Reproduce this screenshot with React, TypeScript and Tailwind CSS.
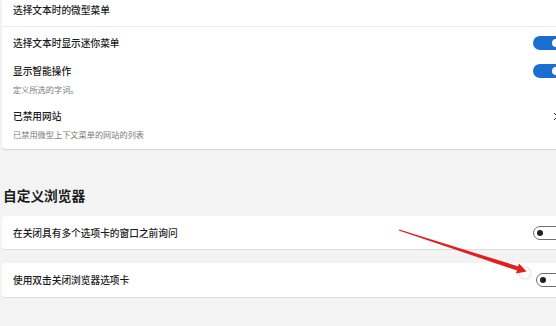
import React from "react";

const font = { fontFamily: '"Noto Sans CJK SC", "Noto Sans", sans-serif' };

function ToggleOn() {
  return (
    <div className="w-[30px] h-[14px] rounded-full bg-[#1a6ed0] flex items-center justify-end pr-[3px] shrink-0">
      <div className="w-[8px] h-[8px] rounded-full bg-white" />
    </div>
  );
}

function ToggleOff({ extra = "" }: { extra?: string }) {
  return (
    <div className={"w-[30px] h-[14px] rounded-full bg-white border border-[#6e6e6e] flex items-center pl-[3px] shrink-0 " + extra}>
      <div className="w-[6px] h-[6px] rounded-full bg-[#1f1f1f]" />
    </div>
  );
}

export default function App() {
  return (
    <div className="relative w-[556px] h-[326px] bg-[#f3f3f3] overflow-hidden text-[#1b1b1b]" style={font}>
      <div className="w-[574px] ml-[2px] flex flex-col">
        {/* top card */}
        <div className="bg-white rounded-b-[4px] shadow-[0_1px_1px_rgba(0,0,0,0.13)] flex flex-col">
          <div className="h-[26px] pb-[7px] pl-[11px] flex items-center text-[9.7px] leading-[14px] font-medium">
            选择文本时的微型菜单
          </div>
          <div className="h-px bg-[#ececec]" />
          <div className="pt-[9px] pb-[9px] pl-[11px] pr-[13px] flex flex-col gap-[14px]">
            <div className="flex items-center justify-between h-[14px]">
              <span className="text-[9.7px] leading-[14px] font-medium">选择文本时显示迷你菜单</span>
              <ToggleOn />
            </div>
            <div className="flex flex-col gap-[5px]">
              <div className="flex items-center justify-between h-[14px]">
                <span className="text-[9.7px] leading-[14px] font-medium">显示智能操作</span>
                <ToggleOn />
              </div>
              <div className="text-[8.2px] leading-[12px] text-[#7a7a7a]">定义所选的字词。</div>
            </div>
            <div className="flex flex-col gap-[5px]">
              <div className="flex items-center justify-between h-[14px]">
                <span className="text-[9.7px] leading-[14px] font-medium">已禁用网站</span>
                <div className="w-[30px] flex justify-start pl-[20px]">
                  <svg width="6" height="9" viewBox="0 0 6 9">
                    <path d="M1 1 L4.5 4.5 L1 8" fill="none" stroke="#333" strokeWidth="1" />
                  </svg>
                </div>
              </div>
              <div className="text-[8.2px] leading-[12px] text-[#7a7a7a]">已禁用微型上下文菜单的网站的列表</div>
            </div>
          </div>
        </div>

        <div className="mt-[36px] h-[20px] flex items-center text-[13.7px] font-semibold leading-[20px] ml-[1px]">
          自定义浏览器
        </div>

        <div className="mt-[11px] h-[34px] bg-white rounded-[4px] border-b border-[#dcdcdc] pl-[11px] pr-[13px] flex items-center justify-between">
          <span className="text-[9.7px] leading-[14px] font-medium">在关闭具有多个选项卡的窗口之前询问</span>
          <ToggleOff />
        </div>

        <div className="mt-[13px] h-[35px] bg-white rounded-[4px] border-b border-[#dcdcdc] pl-[11px] pr-[13px] flex items-center justify-between">
          <span className="text-[9.7px] leading-[14px] font-medium">使用双击关闭浏览器选项卡</span>
          <ToggleOff extra="mr-[-3px]" />
        </div>
      </div>

      {/* red annotation arrow */}
      <svg className="absolute left-0 top-0 pointer-events-none" width="556" height="326" viewBox="0 0 556 326">
        <circle cx="525" cy="273" r="6" fill="none" stroke="#f7e0e0" strokeWidth="1.2" />
        <polygon points="399.2,229.6 398.8,230.4 517.2,270.6 518.4,266.4" fill="#e31e1e" />
        <polygon points="526.5,271.5 516,273.5 519,263.5" fill="#e31e1e" />
      </svg>
    </div>
  );
}
